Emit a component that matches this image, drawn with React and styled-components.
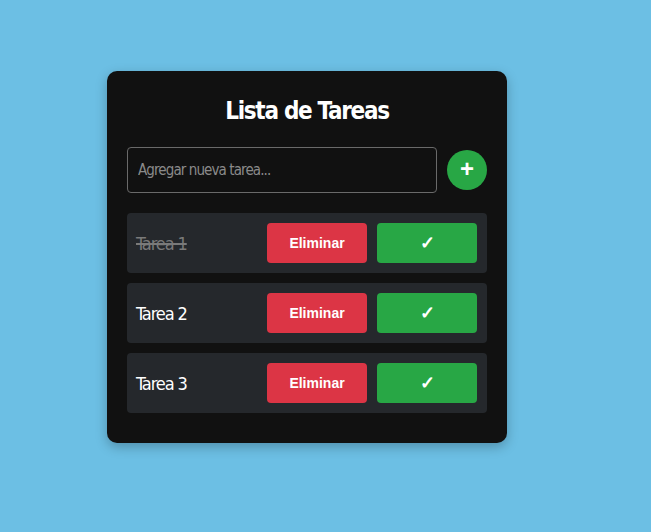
import React, { useState } from 'react';
import styled, { createGlobalStyle } from 'styled-components';

const GlobalStyle = createGlobalStyle`
    body {
        margin: 0;
        background: #6cbfe4;
        font-family: "DejaVu Sans Condensed", "DejaVu Sans", sans-serif;
        font-stretch: condensed;
    }
`;

const Page = styled.div`
    min-height: 532px;
    padding-top: 71px;
    padding-left: 107px;
    box-sizing: border-box;
`;

const Card = styled.div`
    width: 400px;
    box-sizing: border-box;
    background: #111111;
    border-radius: 10px;
    padding: 20px 20px 30px;
    box-shadow: 0 4px 12px rgba(0, 0, 0, 0.25);
`;

const Title = styled.h2`
    margin: 6px 0 22px;
    text-align: center;
    color: #fff;
    font-size: 24px;
    font-weight: bold;
    line-height: 28px;
    letter-spacing: -1.3px;
`;

const Form = styled.form`
    display: flex;
    align-items: center;
    gap: 10px;
    margin-bottom: 20px;
`;

const Input = styled.input`
    flex: 1;
    height: 46px;
    box-sizing: border-box;
    padding: 0 10px;
    background: #111;
    border: 1px solid #6a6a6a;
    border-radius: 4px;
    color: #fff;
    font-family: inherit;
    font-stretch: condensed;
    font-size: 15px;
    letter-spacing: -0.9px;
    &::placeholder {
        color: #8a8a8a;
    }
`;

const AddButton = styled.button`
    width: 40px;
    height: 40px;
    border-radius: 50%;
    border: none;
    background: #28a745;
    color: #fff;
    font-family: "Liberation Sans", Arial, sans-serif;
    font-size: 24px;
    font-weight: bold;
    line-height: 1;
    padding: 0 0 2px;
    display: flex;
    align-items: center;
    justify-content: center;
`;

const List = styled.ul`
    list-style: none;
    margin: 0;
    padding: 0;
    display: flex;
    flex-direction: column;
    gap: 10px;
`;

const Row = styled.li`
    display: flex;
    align-items: center;
    gap: 10px;
    height: 60px;
    box-sizing: border-box;
    padding: 10px 10px 10px 9px;
    background: #25282c;
    border-radius: 4px;
`;

const TaskText = styled.span`
    flex: 1;
    font-size: 18px;
    letter-spacing: -1.1px;
    color: ${props => (props.done ? '#7a7a7a' : '#ffffff')};
    text-decoration: ${props => (props.done ? 'line-through' : 'none')};
    text-decoration-thickness: 2px;
`;

const Action = styled.button`
    width: 100px;
    height: 40px;
    border: none;
    border-radius: 4px;
    background: ${props => props.bg};
    color: #fff;
    font-family: "Liberation Sans", Arial, sans-serif;
    font-size: ${props => props.size || '14px'};
    font-weight: bold;
`;

function App() {
    const [tasks, setTasks] = useState([
        { id: 1, text: 'Tarea 1', done: true },
        { id: 2, text: 'Tarea 2', done: false },
        { id: 3, text: 'Tarea 3', done: false },
    ]);

    const toggle = (id) => {
        setTasks(tasks.map(t => (t.id === id ? { ...t, done: !t.done } : t)));
    };

    const remove = (id) => {
        setTasks(tasks.filter(t => t.id !== id));
    };

    return (
        <Page>
            <GlobalStyle />
            <Card>
                <Title>Lista de Tareas</Title>
                <Form onSubmit={e => e.preventDefault()}>
                    <Input type='text' placeholder='Agregar nueva tarea...' />
                    <AddButton>+</AddButton>
                </Form>
                <List>
                    {tasks.map(task => (
                        <Row key={task.id}>
                            <TaskText done={task.done}>{task.text}</TaskText>
                            <Action bg='#dc3545' onClick={() => remove(task.id)}>Eliminar</Action>
                            <Action bg='#28a745' size='18px' onClick={() => toggle(task.id)}>✓</Action>
                        </Row>
                    ))}
                </List>
            </Card>
        </Page>
    );
}

export default App;
